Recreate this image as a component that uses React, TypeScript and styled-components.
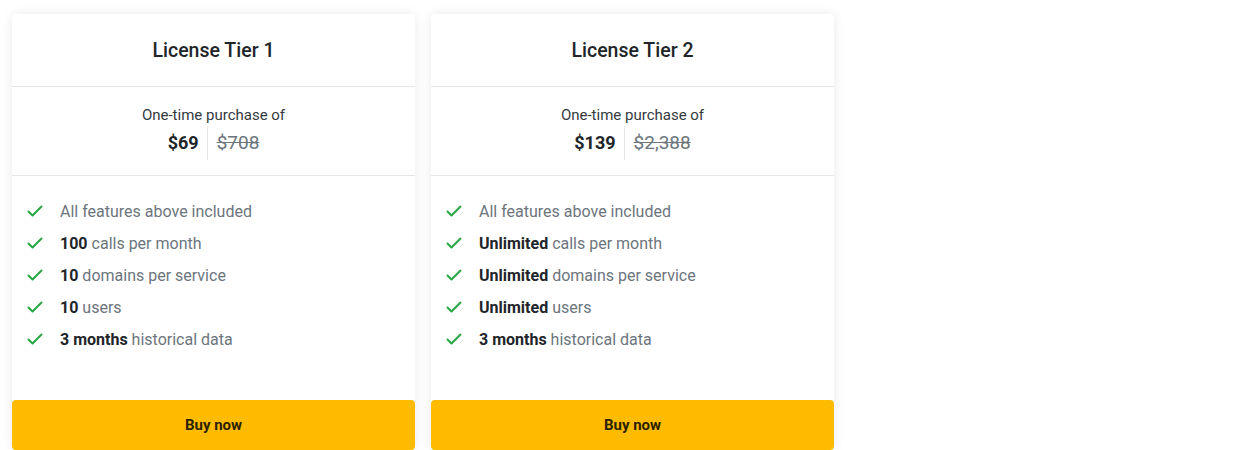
import React, { ReactElement } from 'react';
import styled, { createGlobalStyle } from 'styled-components';

const GlobalStyle = createGlobalStyle`
  body {
    margin: 0;
    background: #fff;
    font-family: Roboto, 'Liberation Sans', sans-serif;
    color: #212529;
  }
`;

interface Feature {
  strong?: string;
  text: string;
}

interface Tier {
  name: string;
  price: string;
  oldPrice: string;
  features: Feature[];
}

const tiers: Tier[] = [
  {
    name: 'License Tier 1',
    price: '$69',
    oldPrice: '$708',
    features: [
      { text: 'All features above included' },
      { strong: '100', text: 'calls per month' },
      { strong: '10', text: 'domains per service' },
      { strong: '10', text: 'users' },
      { strong: '3 months', text: 'historical data' },
    ],
  },
  {
    name: 'License Tier 2',
    price: '$139',
    oldPrice: '$2,388',
    features: [
      { text: 'All features above included' },
      { strong: 'Unlimited', text: 'calls per month' },
      { strong: 'Unlimited', text: 'domains per service' },
      { strong: 'Unlimited', text: 'users' },
      { strong: '3 months', text: 'historical data' },
    ],
  },
];

const Page = styled.div`
  display: flex;
  gap: 16px;
  padding: 14px 12px 0;
`;

const Card = styled.div`
  width: 403px;
  display: flex;
  flex-direction: column;
  background: #fff;
  box-shadow: 0 0 12px rgba(0, 0, 0, 0.09);
  border-radius: 4px;
`;

const Header = styled.div`
  height: 72px;
  display: flex;
  align-items: center;
  justify-content: center;
  border-bottom: 1px solid #e6e6e6;
`;

const Title = styled.h3`
  margin: 0;
  font-size: 19.5px;
  font-weight: 500;
  color: #212529;
`;

const PriceBox = styled.div`
  height: 89px;
  display: flex;
  flex-direction: column;
  align-items: center;
  justify-content: center;
  border-bottom: 1px solid #e6e6e6;
  padding-top: 4px;
  box-sizing: border-box;
`;

const PriceLabel = styled.div`
  font-size: 15px;
  color: #343a40;
  margin-bottom: 2px;
`;

const PriceRow = styled.div`
  display: flex;
  align-items: center;
`;

const Price = styled.span`
  font-size: 18px;
  font-weight: 700;
  color: #212529;
  padding-right: 8px;
  line-height: 34px;
`;

const OldPrice = styled.span`
  font-size: 19px;
  color: #6c757d;
  text-decoration: line-through;
  padding-left: 9px;
  border-left: 1px solid #e6e6e6;
  line-height: 34px;
`;

const Features = styled.ul`
  list-style: none;
  margin: 0;
  padding: 19px 0 0 14px;
  height: 224px;
  box-sizing: border-box;
`;

const Item = styled.li`
  display: flex;
  align-items: center;
  height: 32px;
  font-size: 16px;
  color: #6c757d;
  gap: 16px;
`;

const Strong = styled.b`
  color: #212529;
  font-weight: 700;
  margin-right: 4px;
`;

const Button = styled.button`
  height: 50px;
  border: none;
  border-radius: 4px;
  background: #ffbb00;
  color: #2b2200;
  font-family: Roboto, 'Liberation Sans', sans-serif;
  font-size: 15px;
  font-weight: 700;
  cursor: pointer;
`;

function Check(): ReactElement {
  return (
    <svg width="18" height="18" viewBox="0 0 18 18" fill="none">
      <path d="M2.5 9.5l4 4 9-9" stroke="#28a745" strokeWidth="2" strokeLinecap="round" strokeLinejoin="round" />
    </svg>
  );
}

function PricingCard({ name, price, oldPrice, features }: Tier): ReactElement {
  return (
    <Card>
      <Header>
        <Title>{name}</Title>
      </Header>
      <PriceBox>
        <PriceLabel>One-time purchase of</PriceLabel>
        <PriceRow>
          <Price>{price}</Price>
          <OldPrice>{oldPrice}</OldPrice>
        </PriceRow>
      </PriceBox>
      <Features>
        {features.map((f, i) => (
          <Item key={i}>
            <Check />
            <span>
              {f.strong && <Strong>{f.strong}</Strong>}
              {f.text}
            </span>
          </Item>
        ))}
      </Features>
      <Button>Buy now</Button>
    </Card>
  );
}

export default function App(): ReactElement {
  return (
    <>
      <GlobalStyle />
      <Page>
        {tiers.map((t) => (
          <PricingCard key={t.name} {...t} />
        ))}
      </Page>
    </>
  );
}
